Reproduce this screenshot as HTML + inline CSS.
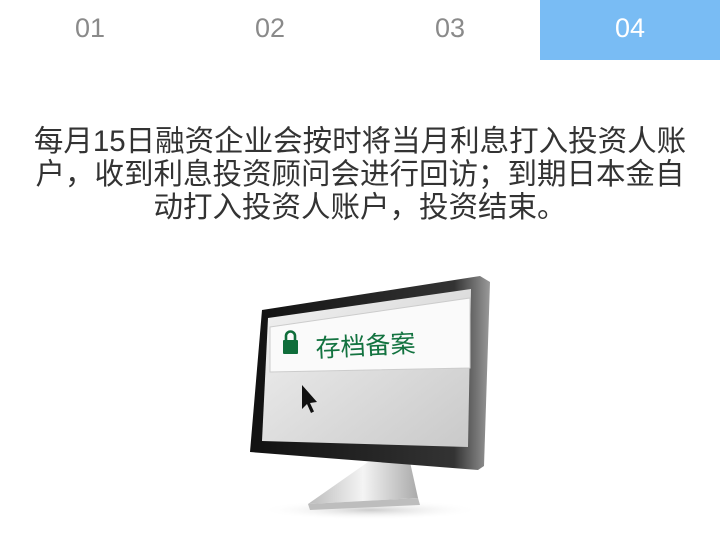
<!DOCTYPE html>
<html><head><meta charset="utf-8"><style>
body{margin:0;width:720px;height:549px;background:#fff;overflow:hidden;font-family:"Liberation Sans","Noto Sans CJK SC",sans-serif}
.tabs{display:flex;height:60px}
.tabs div{width:180px;text-align:center;line-height:56px;font-size:27px;color:#8a8a8a}
.tabs .on{background:#79bcf4;color:#fff}
.txt{position:absolute;top:125px;left:0;width:720px;text-align:center;font-size:29.5px;line-height:33px;color:#333;white-space:nowrap}
</style></head><body>
<div class="tabs"><div>01</div><div>02</div><div>03</div><div class="on">04</div></div>
<div class="txt">每月15日融资企业会按时将当月利息打入投资人账<br>户，收到利息投资顾问会进行回访；到期日本金自<br>动打入投资人账户，投资结束。</div>
<svg width="720" height="549" style="position:absolute;left:0;top:0">
<defs>
<linearGradient id="fr" x1="0" y1="0" x2="1" y2="0"><stop offset="0" stop-color="#111"/><stop offset="0.85" stop-color="#333"/><stop offset="1" stop-color="#9a9a9a"/></linearGradient>
<linearGradient id="sc" x1="0" y1="0" x2="1" y2="1"><stop offset="0" stop-color="#f2f2f2"/><stop offset="1" stop-color="#c9c9c9"/></linearGradient>
<linearGradient id="st" x1="0" y1="0" x2="1" y2="0"><stop offset="0" stop-color="#bbb"/><stop offset="0.5" stop-color="#f4f4f4"/><stop offset="1" stop-color="#aaa"/></linearGradient>
<radialGradient id="sh"><stop offset="0" stop-color="#ccc"/><stop offset="1" stop-color="#fff" stop-opacity="0"/></radialGradient>
</defs>
<ellipse cx="370" cy="510" rx="110" ry="10" fill="url(#sh)"/>
<polygon points="368,462 410,462 418,498 308,504" fill="url(#st)"/>
<polygon points="308,504 418,498 420,505 310,510" fill="#bdbdbd"/>
<polygon points="262,310 480,276 490,282 484,466 478,470 250,452" fill="url(#fr)"/>
<polygon points="268,318 471,289 468,447 262,441" fill="url(#sc)"/>
<polygon points="270,327 470,298 470,368 270,372" fill="#fafafa" stroke="#ccc"/>
<rect x="283" y="340" width="15" height="14" rx="1" fill="#0f6d3a"/>
<path d="M286,341 v-5 a4.5,4.5 0 0 1 9,0 v5" fill="none" stroke="#0f6d3a" stroke-width="2.6"/>
<text x="316" y="357" font-size="25" fill="#137340" font-family="Noto Sans CJK SC,sans-serif" transform="rotate(-3 316 357)">存档备案</text>
<path d="M302,385 l0,24 l5,-5 l4,9 l3,-1.5 l-4,-8.5 l7,-1 z" fill="#111"/>
</svg>
</body></html>
